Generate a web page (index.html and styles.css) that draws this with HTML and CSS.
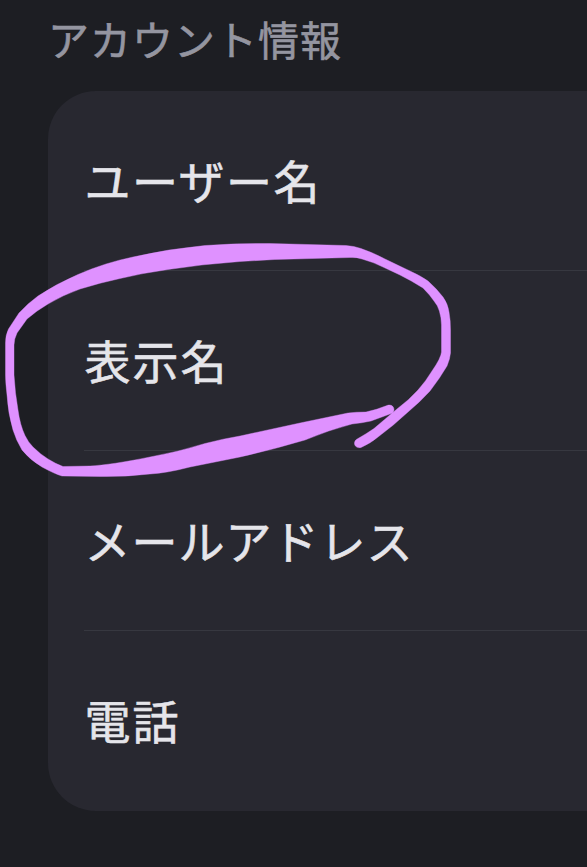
FILE: index.html
```html
<!DOCTYPE html>
<html lang="ja">
<head>
<meta charset="utf-8">
<title>アカウント情報</title>
<link rel="stylesheet" href="styles.css">
</head>
<body>
<main class="page">
  <h1 class="heading">アカウント情報</h1>
  <ul class="card">
    <li class="row"><span class="label">ユーザー名</span></li>
    <li class="row"><span class="label label-wide">表示名</span></li>
    <li class="row"><span class="label label-kana">メールアドレス</span></li>
    <li class="row"><span class="label label-wide">電話</span></li>
  </ul>
  <svg class="marker" viewBox="0 0 587 867" aria-hidden="true">
    <path d="M5.500 343Q5.500 335 8.500 329L19 313Q27 304 38 296Q56 284 78 274.500Q104 263 133 257Q168 249 205 245.500Q238 243 270 243.500L346 245.500Q354 246 361 248.500Q374 253 385 259L410 271Q421 276 428 281Q436 288 443 297Q448 304 449 312Q450.500 320 450.500 330L450.500 353Q450 359 447 366Q440 378 430 391Q420 402 408 412Q393 426 378 437Q371 443 361 447.500C354 449 352 441 358 438.500Q366 434 374 428.500Q384 420 397 409Q409 400 418 390Q426 381 432 371Q441 358 441.500 352L441.500 325Q441 309 434 301Q430 295 423 288Q412 281 400 275L383 267Q373 262 362 259Q357 257 350 257.500L275 259.500L240 261.500Q204 264 168 269.500Q143 273 120 278.500Q99 283 80 289Q63 295 48 304Q36 311 27 319Q22 326 17 333Q14 339 14 345L14 375Q15 393 18 410Q20 425 25 435.500Q28 442 33 447Q40 454 48 459Q56 464 63 466.500L90 466Q111 465 150 457Q178 452 205 443.500Q222 439 240 436L300 423L348 413Q356 412 366 412Q376 410 387 405.500C394 403 397 412 390 414L371 421Q362 423 352 424Q329 430 305 440Q275 449 240 457L190 467Q167 473 150 474Q125 477 100 476.500L62 476Q55 474 42 467Q30 460 22 450Q16 440 13 430Q8 413 7 395Q5.500 382 5.500 375Z"/>
  </svg>
</main>
</body>
</html>
```

FILE: styles.css
```css
* {
  box-sizing: border-box;
}

body {
  margin: 0;
  background: #1d1e23;
  font-family: "Noto Sans CJK JP", sans-serif;
}

.page {
  position: relative;
  width: 587px;
  height: 867px;
  padding: 8px 0 0 48px;
  overflow: hidden;
}

.heading {
  margin: 0 0 23px;
  height: 60px;
  font-size: 41px;
  font-weight: 400;
  line-height: 60px;
  letter-spacing: 1px;
  color: #9495a0;
  -webkit-text-stroke: 0.6px #9495a0;
}

.card {
  margin: 0;
  padding: 0 0 0 36px;
  height: 720px;
  list-style: none;
  background: #282830;
  border-radius: 48px 0 0 48px;
}

.row {
  display: flex;
  align-items: center;
  height: 180px;
  padding-bottom: 3px;
  border-bottom: 1px solid #373840;
}

.row:last-child {
  border-bottom-color: transparent;
}

.label {
  padding-left: 0.5px;
  font-size: 46px;
  line-height: 68px;
  letter-spacing: 1.5px;
  color: #e5e5ea;
  -webkit-text-stroke: 0.6px #e5e5ea;
}

.label-wide {
  letter-spacing: 2px;
}

.label-kana {
  letter-spacing: 1px;
}

.marker {
  position: absolute;
  inset: 0;
  width: 587px;
  height: 867px;
  fill: #df91ff;
  stroke: #df91ff;
  stroke-width: 0.4;
  stroke-linejoin: round;
}
```
